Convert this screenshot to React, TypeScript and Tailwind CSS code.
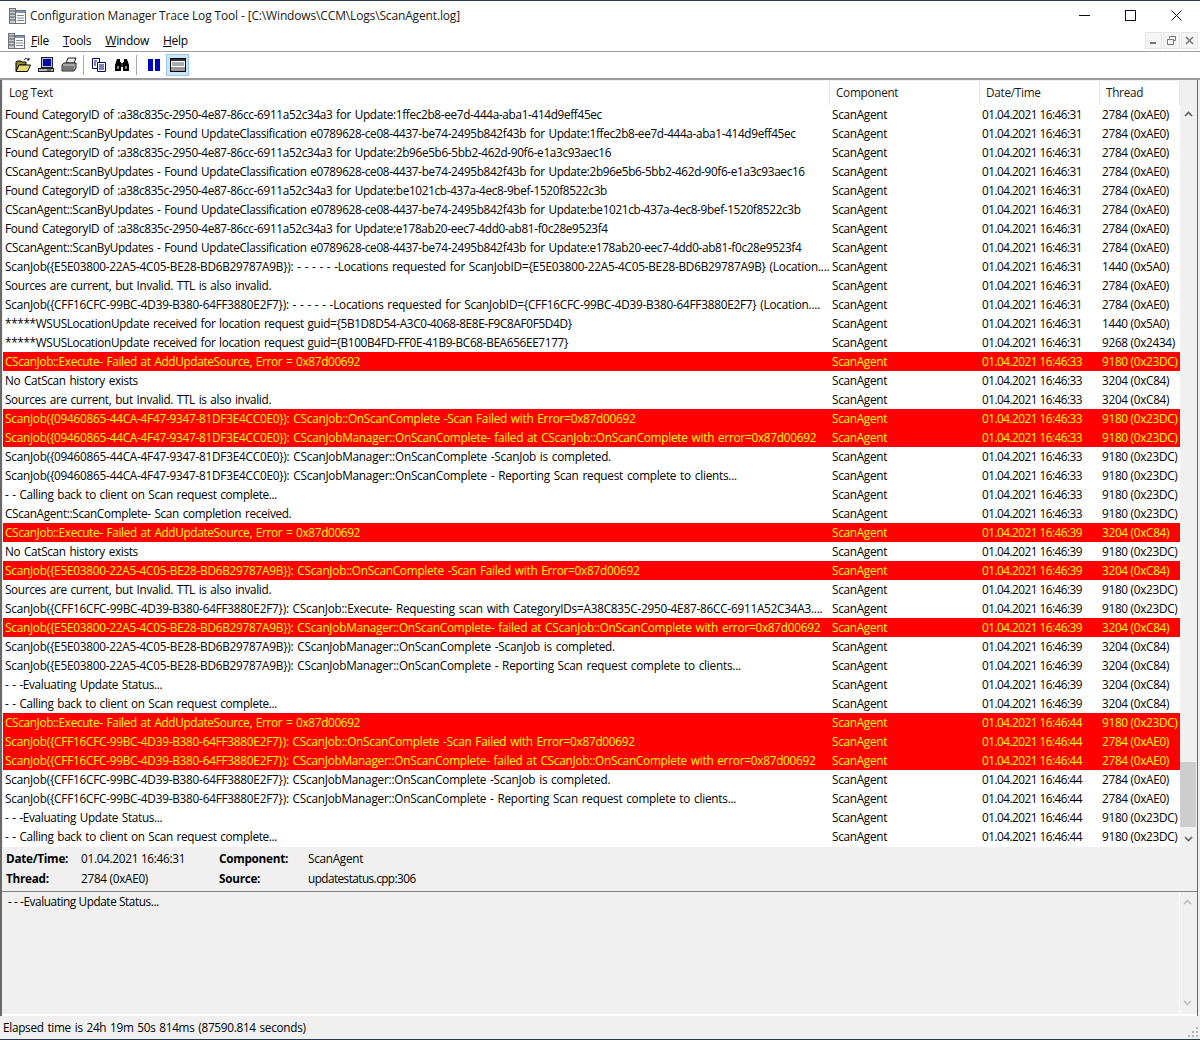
import React from 'react';

const catId = 'a38c835c-2950-4e87-86cc-6911a52c34a3';
const classId = 'e0789628-ce08-4437-be74-2495b842f43b';
const e5 = 'ScanJob({E5E03800-22A5-4C05-BE28-BD6B29787A9B})';
const cf = 'ScanJob({CFF16CFC-99BC-4D39-B380-64FF3880E2F7})';
const n09 = 'ScanJob({09460865-44CA-4F47-9347-81DF3E4CC0E0})';
const found = (u: string) => `Found CategoryID of :${catId} for Update:${u}`;
const classif = (u: string) => `CScanAgent::ScanByUpdates - Found UpdateClassification ${classId} for Update:${u}`;
const failedScan = (j: string) => `${j}: CScanJob::OnScanComplete -Scan Failed with Error=0x87d00692`;
const failedMgr = (j: string) => `${j}: CScanJobManager::OnScanComplete- failed at CScanJob::OnScanComplete with error=0x87d00692`;
const done = (j: string) => `${j}: CScanJobManager::OnScanComplete -ScanJob is completed.`;
const report = (j: string) => `${j}: CScanJobManager::OnScanComplete - Reporting Scan request complete to clients...`;
const execFail = 'CScanJob::Execute- Failed at AddUpdateSource, Error = 0x87d00692';
const sources = 'Sources are current, but Invalid. TTL is also invalid.';
const noCat = 'No CatScan history exists';
const calling = '- - Calling back to client on Scan request complete...';
const evaluating = '- - -Evaluating Update Status...';

const t1 = '2784 (0xAE0)';
const t2 = '1440 (0x5A0)';
const t3 = '9180 (0x23DC)';
const t4 = '3204 (0xC84)';

// text, seconds, thread, is error
const rows: [string, string, string, boolean?][] = [
  [found('1ffec2b8-ee7d-444a-aba1-414d9eff45ec'), '31', t1],
  [classif('1ffec2b8-ee7d-444a-aba1-414d9eff45ec'), '31', t1],
  [found('2b96e5b6-5bb2-462d-90f6-e1a3c93aec16'), '31', t1],
  [classif('2b96e5b6-5bb2-462d-90f6-e1a3c93aec16'), '31', t1],
  [found('be1021cb-437a-4ec8-9bef-1520f8522c3b'), '31', t1],
  [classif('be1021cb-437a-4ec8-9bef-1520f8522c3b'), '31', t1],
  [found('e178ab20-eec7-4dd0-ab81-f0c28e9523f4'), '31', t1],
  [classif('e178ab20-eec7-4dd0-ab81-f0c28e9523f4'), '31', t1],
  [`${e5}: - - - - - -Locations requested for ScanJobID={E5E03800-22A5-4C05-BE28-BD6B29787A9B} (Location....`, '31', t2],
  [sources, '31', t1],
  [`${cf}: - - - - - -Locations requested for ScanJobID={CFF16CFC-99BC-4D39-B380-64FF3880E2F7} (Location....`, '31', t1],
  ['*****WSUSLocationUpdate received for location request guid={5B1D8D54-A3C0-4068-8E8E-F9C8AF0F5D4D}', '31', t2],
  ['*****WSUSLocationUpdate received for location request guid={B100B4FD-FF0E-41B9-BC68-BEA656EE7177}', '31', '9268 (0x2434)'],
  [execFail, '33', t3, true],
  [noCat, '33', t4],
  [sources, '33', t4],
  [failedScan(n09), '33', t3, true],
  [failedMgr(n09), '33', t3, true],
  [done(n09), '33', t3],
  [report(n09), '33', t3],
  [calling, '33', t3],
  ['CScanAgent::ScanComplete- Scan completion received.', '33', t3],
  [execFail, '39', t4, true],
  [noCat, '39', t3],
  [failedScan(e5), '39', t4, true],
  [sources, '39', t3],
  [`${cf}: CScanJob::Execute- Requesting scan with CategoryIDs=A38C835C-2950-4E87-86CC-6911A52C34A3....`, '39', t3],
  [failedMgr(e5), '39', t4, true],
  [done(e5), '39', t4],
  [report(e5), '39', t4],
  [evaluating, '39', t4],
  [calling, '39', t4],
  [execFail, '44', t3, true],
  [failedScan(cf), '44', t1, true],
  [failedMgr(cf), '44', t1, true],
  [done(cf), '44', t1],
  [report(cf), '44', t1],
  [evaluating, '44', t3],
  [calling, '44', t3],
];

const LogIcon = () => (
  <svg width="17" height="16" viewBox="0 0 17 16">
    <rect x="0.5" y="0.5" width="6" height="15" fill="#c8ccd0" stroke="#6c7078" />
    <path d="M1 3h5M1 6h5M1 9h5M1 12h5" stroke="#4d5259" />
    <rect x="6.5" y="2.5" width="10" height="13" fill="#fff" stroke="#6c7078" />
    <rect x="7" y="3" width="9" height="2" fill="#7f97ad" />
    <path d="M8 7.5h7M8 10h7M8 12.5h7" stroke="#7f8a96" />
  </svg>
);

const toolIcons = [
  <svg key="open" width="16" height="16" viewBox="0 0 16 16">
    <path d="M1 5l1-1h4l1 1h4v3H5l-4 6z" fill="#8f8a2c" stroke="#000" />
    <path d="M1 14.5l3-6.500h11.500l-3 6.500z" fill="#e8dc6e" stroke="#000" />
    <path d="M9 3c1-2 3-2 5 0m0-2v2h-2" fill="none" stroke="#000" />
  </svg>,
  <svg key="pc" width="16" height="16" viewBox="0 0 16 16">
    <rect x="3.500" y="0.500" width="11" height="10" fill="#c0c0c0" stroke="#222" />
    <rect x="5" y="2" width="8" height="7" fill="#0000b0" />
    <rect x="0.500" y="11.500" width="15" height="3" fill="#b5b5b5" stroke="#222" />
    <path d="M9 13h4" stroke="#222" />
  </svg>,
  <svg key="print" width="16" height="16" viewBox="0 0 16 16">
    <path d="M5 6l2-5h8l-2 5z" fill="#e8e8e8" stroke="#222" />
    <path d="M1 8l2-2h12v5l-2 3H1z" fill="#a8a8a8" stroke="#222" />
    <path d="M2 10h11M2 12h11" stroke="#444" />
  </svg>,
  null,
  <svg key="copy" width="16" height="16" viewBox="0 0 16 16">
    <path d="M1.500 1.500h7v10h-7z" fill="#fff" stroke="#00006c" />
    <path d="M6.500 5.500h8v9h-8z" fill="#fff" stroke="#00006c" />
    <path d="M8 8h5M8 10h5M8 12h5M3 4h3M3 6h2M3 8h2" stroke="#00006c" />
  </svg>,
  <svg key="find" width="16" height="16" viewBox="0 0 16 16">
    <path d="M3 2h3v3h1v9H1V8zM10 2h3l2 6v6H9V5h1z" fill="#000" />
    <path d="M7 6h2v4H7z" fill="#333" />
    <rect x="3" y="9" width="2" height="3" fill="#888" />
    <rect x="11" y="9" width="2" height="3" fill="#888" />
  </svg>,
  null,
];

function Row({ text, sec, thread, error }: { text: string; sec: string; thread: string; error?: boolean }) {
  return (
    <div className={`flex h-[19px] items-center whitespace-nowrap ${error ? 'bg-[#ff0000] text-[#ffff00]' : 'text-black'}`}>
      <div className={`w-[829px] pl-[2px] pr-[2px] overflow-hidden [word-spacing:1px] ${text.startsWith('ScanJob') ? 'tracking-[-0.22px]' : 'tracking-[-0.32px]'}`}>{text}</div>
      <div className="w-[150px]">ScanAgent</div>
      <div className="w-[120px] tracking-[-0.5px]">01.04.2021 16:46:{sec}</div>
      <div>{thread}</div>
    </div>
  );
}

export default function App() {
  return (
    <div className="w-[1200px] h-[1040px] flex flex-col bg-[#f0f0f0] text-[11.75px] text-black overflow-hidden font-['Open_Sans','Liberation_Sans',sans-serif] tracking-[-0.28px]">
      {/* title bar */}
      <div className="h-[30px] bg-white border-t border-[#2a3a4a] flex items-center pl-[9px] shrink-0">
        <LogIcon />
        <span className="ml-[4px] pt-[1px] text-[#1a1a1a] text-[12px] tracking-[-0.15px]">Configuration Manager Trace Log Tool - [C:\Windows\CCM\Logs\ScanAgent.log]</span>
        <div className="ml-auto flex items-center pr-[1px]">
          <div className="w-[46px] flex justify-center">
            <svg width="11" height="11" viewBox="0 0 11 11"><path d="M0 5.500h11" stroke="#111" /></svg>
          </div>
          <div className="w-[46px] flex justify-center">
            <svg width="11" height="11" viewBox="0 0 11 11"><rect x=".5" y=".5" width="10" height="10" fill="none" stroke="#111" /></svg>
          </div>
          <div className="w-[46px] flex justify-center">
            <svg width="11" height="11" viewBox="0 0 11 11"><path d="M.5.5l10 10M10.500.5l-10 10" stroke="#111" /></svg>
          </div>
        </div>
      </div>

      {/* menu */}
      <div className="h-[21px] bg-white flex items-center pl-[8px] shrink-0">
        <LogIcon />
        <div className="flex gap-[14px] ml-[6px] pt-[1px] text-[12px]">
          <span><u>F</u>ile</span>
          <span><u>T</u>ools</span>
          <span><u>W</u>indow</span>
          <span><u>H</u>elp</span>
        </div>
        <div className="ml-auto flex gap-[1px] pr-[2px]">
          <div className="w-[17px] h-[17px] border border-[#e5e5e5] bg-[#f5f5f5] flex items-center justify-center">
            <svg width="9" height="9" viewBox="0 0 9 9"><rect x="1" y="6" width="6" height="2" fill="#777" /></svg>
          </div>
          <div className="w-[17px] h-[17px] border border-[#e5e5e5] bg-[#f5f5f5] flex items-center justify-center">
            <svg width="9" height="9" viewBox="0 0 9 9"><path d="M2.500 2.500V.5h6v4h-2M.5 3.500h6v5h-6zM.5 3.500h6" fill="none" stroke="#777" /></svg>
          </div>
          <div className="w-[17px] h-[17px] border border-[#e5e5e5] bg-[#f5f5f5] flex items-center justify-center">
            <svg width="9" height="9" viewBox="0 0 9 9"><path d="M1 1l7 7M8 1l-7 7" stroke="#777" strokeWidth="1.6" /></svg>
          </div>
        </div>
      </div>

      {/* toolbar */}
      <div className="h-[29px] bg-white border-t border-[#a0a0a0] border-b-2 border-b-[#9c9c9c] flex items-center pl-[11px] shrink-0">
        {toolIcons.map((icon, i) =>
          icon ? (
            <div key={i} className="w-[23px] flex justify-center">{icon}</div>
          ) : (
            <div key={i} className="w-[1px] h-[20px] bg-[#a8a8a8] mx-[3px]" />
          ),
        )}
        <div className="w-[23px] ml-[2px] flex justify-center">
          <svg width="16" height="16" viewBox="0 0 16 16">
            <rect x="2" y="2" width="5" height="12" fill="#0000c0" />
            <rect x="9" y="2" width="5" height="12" fill="#0000c0" />
          </svg>
        </div>
        <div className="w-[23px] h-[22px] ml-[1px] flex justify-center items-center bg-[#cce4f7] border border-[#99c9ef]">
          <svg width="16" height="16" viewBox="0 0 16 16">
            <rect x=".5" y="1.500" width="15" height="13" fill="#fff" stroke="#000" />
            <rect x="1" y="2" width="14" height="2" fill="#333" />
            <path d="M2 6h12M2 8h12" stroke="#555" />
            <rect x="1" y="10" width="14" height="4" fill="#999" />
          </svg>
        </div>
      </div>

      {/* everything under the toolbar, inside the sunken frame */}
      <div className="flex-1 flex flex-col min-h-0">
        <div className="h-[936px] flex flex-col shrink-0 border-l-2 border-r border-[#696969] mr-[2px]">
          {/* log list */}
          <div className="h-[767px] flex shrink-0 pl-[1px] pr-[1px] pt-[1px]">
            <div className="flex-1 flex flex-col bg-white overflow-hidden">
              <div className="h-[24px] flex shrink-0 items-center text-[#1a1a1a] bg-white">
                <div className="w-[827px] h-full pl-[6px] flex items-center border-r border-[#e5e5e5]">Log Text</div>
                <div className="w-[150px] h-full pl-[6px] flex items-center border-r border-[#e5e5e5]">Component</div>
                <div className="w-[120px] h-full pl-[6px] flex items-center border-r border-[#e5e5e5]">Date/Time</div>
                <div className="w-[80px] h-full pl-[6px] flex items-center border-r border-[#e5e5e5]">Thread</div>
              </div>
              {rows.map(([text, sec, thread, error], i) => (
                <Row key={i} text={text} sec={sec} thread={thread} error={error} />
              ))}
            </div>
            <div className="w-[16px] flex flex-col bg-[#f0f0f0] mt-[24px]">
              <div className="h-[17px] flex items-center justify-center">
                <svg width="9" height="6" viewBox="0 0 9 6"><path d="M1 5l3.500-3.500L8 5" fill="none" stroke="#606060" strokeWidth="1.6" /></svg>
              </div>
              <div className="flex-1 flex flex-col justify-end pb-[3px]">
                <div className="h-[65px] bg-[#cdcdcd]" />
              </div>
              <div className="h-[17px] flex items-center justify-center">
                <svg width="9" height="6" viewBox="0 0 9 6"><path d="M1 1l3.500 3.500L8 1" fill="none" stroke="#606060" strokeWidth="1.6" /></svg>
              </div>
            </div>
          </div>

          {/* details */}
          <div className="h-[45px] flex flex-col justify-center gap-[1px] pl-[4px] shrink-0 border-b border-[#808080]">
            <div className="flex h-[19px] items-center">
              <b className="w-[75px]">Date/Time:</b>
              <span className="w-[138px]">01.04.2021 16:46:31</span>
              <b className="w-[89px]">Component:</b>
              <span>ScanAgent</span>
            </div>
            <div className="flex h-[19px] items-center">
              <b className="w-[75px]">Thread:</b>
              <span className="w-[138px]">2784 (0xAE0)</span>
              <b className="w-[89px]">Source:</b>
              <span className="tracking-[-0.55px]">updatestatus.cpp:306</span>
            </div>
          </div>

          {/* selected message */}
          <div className="flex-1 flex min-h-0 border-b-2 border-white">
            <div className="flex-1 pl-[6px] leading-[18px] tracking-[-0.4px]">- - -Evaluating Update Status...</div>
            <div className="w-[18px] border-l border-white flex flex-col justify-between items-center pt-[7px] pb-[8px] pr-[3px]">
              <svg width="9" height="6" viewBox="0 0 9 6"><path d="M1 5l3.500-3.500L8 5" fill="none" stroke="#bdbdbd" strokeWidth="1.6" /></svg>
              <svg width="9" height="6" viewBox="0 0 9 6"><path d="M1 1l3.500 3.500L8 1" fill="none" stroke="#bdbdbd" strokeWidth="1.6" /></svg>
            </div>
          </div>
        </div>

        {/* status bar */}
        <div className="flex-1 flex items-center pl-[3px] relative border-b border-[#2a3a4a] [word-spacing:1px]">
          Elapsed time is 24h 19m 50s 814ms (87590.814 seconds)
          <svg className="absolute right-[1px] bottom-[1px]" width="12" height="12" viewBox="0 0 12 12">
            <path d="M9 1h2v2H9zM5 5h2v2H5zM9 5h2v2H9zM1 9h2v2H1zM5 9h2v2H5zM9 9h2v2H9z" fill="#b5b5b5" />
          </svg>
        </div>
      </div>
    </div>
  );
}
